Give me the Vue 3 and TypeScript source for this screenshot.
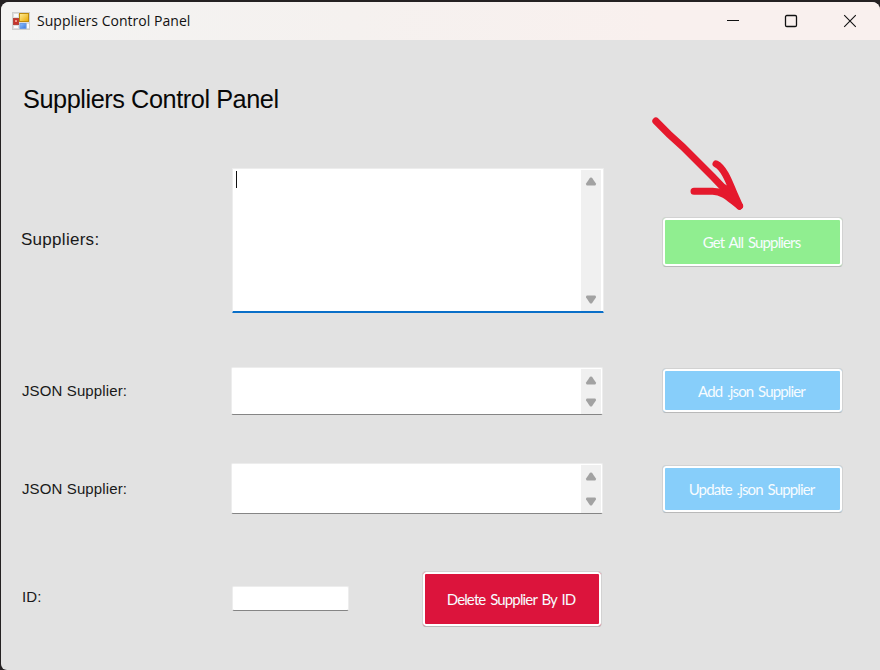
<script setup lang="ts">
import { ref } from 'vue'

interface Row {
  key: string
  label: string
  action: string
}

const rows: Row[] = [
  { key: 'all', label: 'Suppliers:', action: 'Get All Suppliers' },
  { key: 'add', label: 'JSON Supplier:', action: 'Add .json Supplier' },
  { key: 'update', label: 'JSON Supplier:', action: 'Update .json Supplier' },
]

const focused = ref('all')
</script>

<template>
  <div class="desktop">
    <main class="window">
      <header class="titlebar">
        <svg class="app-icon" width="18" height="18" viewBox="0 0 18 18">
          <defs>
            <linearGradient id="gold" x1="0" y1="0" x2="1" y2="1">
              <stop offset="0" stop-color="#ffee9a" />
              <stop offset="1" stop-color="#e9a800" />
            </linearGradient>
            <linearGradient id="blue" x1="0" y1="0" x2="1" y2="1">
              <stop offset="0" stop-color="#8fc0ff" />
              <stop offset="1" stop-color="#3a78dc" />
            </linearGradient>
          </defs>
          <rect x=".5" y=".5" width="17" height="17" fill="#dededc" stroke="#cfcfce" />
          <path d="M2 2h4v3H2zM2 14h4v2H2zM15 12h2v4h-2z" fill="#fbfbfb" />
          <rect x="1.5" y="6.5" width="5" height="6" fill="#c8342b" stroke="#b5443c" />
          <rect x="3" y="8" width="2" height="2" fill="#ee9a8c" />
          <rect x="7.5" y="1.5" width="9" height="8" fill="url(#gold)" stroke="#bd8a0c" />
          <rect x="8" y="11.5" width="6" height="5" fill="url(#blue)" stroke="#6d9de6" />
        </svg>
        <span class="caption">Suppliers Control Panel</span>
        <svg class="controls" width="132" height="14" viewBox="0 0 132 14" fill="none" stroke="#111" stroke-width="1.1">
          <path d="M1 6.5h12" />
          <rect x="59.5" y="1.5" width="11" height="11" rx="1.3" stroke-width="1.3" />
          <path d="M118.2 1.2l11.6 11.6M129.8 1.2l-11.6 11.6" />
        </svg>
      </header>

      <section class="form">
        <h1>Suppliers Control Panel</h1>

        <div v-for="row in rows" :key="row.key" class="row" :class="row.key">
          <label>{{ row.label }}</label>
          <div class="box" :class="{ focused: focused === row.key }">
            <i v-if="focused === row.key" class="caret"></i>
            <div class="scroll">
              <svg width="12" height="9" viewBox="0 0 12 9"><path d="M5 .8Q6 0 7 .8L10.9 6.5Q11.3 8.4 10 8.4H2Q.7 8.4 1.1 6.500Z" /></svg>
              <svg width="12" height="9" viewBox="0 0 12 9"><path d="M5 8.2Q6 9 7 8.2L10.9 2.5Q11.3 .6 10 .6H2Q.7 .6 1.1 2.500Z" /></svg>
            </div>
          </div>
          <button type="button"><span>{{ row.action }}</span></button>
        </div>

        <div class="row remove">
          <label>ID:</label>
          <div class="box id-box"></div>
          <button type="button"><span>Delete Supplier By ID</span></button>
        </div>
      </section>
    </main>

    <svg class="arrow" width="100" height="100" viewBox="650 113 100 100" fill="none" stroke="#e5192d" stroke-width="7" stroke-linecap="round" stroke-linejoin="round">
      <path d="M655.8 121Q669 135 683 147L713 177Q726 190 739.5 206" />
      <path d="M716 163.8C726 169 731 188 736 198L739.5 206" />
      <path d="M694 191.3H712C724 191 731 200 739.5 206" />
      <path d="M725 186L733 190L737 201L724 191Z" fill="#e5192d" stroke-width="3" />
    </svg>
  </div>
</template>

<style>
body {
  margin: 0;
  overflow: hidden;
}
</style>

<style scoped>
.desktop {
  position: relative;
  box-sizing: border-box;
  width: 880px;
  height: 670px;
  padding: 2px 0 0 1px;
  background: #242122;
  font-family: 'Liberation Sans', Arial, sans-serif;
  overflow: hidden;
}
.window {
  height: 668px;
  border-radius: 8px 8px 0 6px;
  background: #e2e2e2;
  overflow: hidden;
}
.titlebar {
  display: flex;
  align-items: center;
  box-sizing: border-box;
  height: 38px;
  padding: 0 22px 0 11px;
  background: linear-gradient(90deg, #f3f3f2 0%, #f5f1ef 40%, #f9f0ee 75%);
}
.caption {
  flex: 1;
  margin-left: 7px;
  font: 14px/20px 'Open Sans', 'Noto Sans', sans-serif;
  letter-spacing: 0.03px;
  color: #111;
  white-space: nowrap;
}
.form {
  padding: 43px 0 0 20px;
}
h1 {
  margin: 0 0 0 2px;
  height: 32px;
  font-size: 25.3px;
  line-height: 32px;
  font-weight: 400;
  letter-spacing: -0.44px;
  color: #080808;
  white-space: nowrap;
}
.row {
  display: grid;
  align-items: center;
}
.row > button {
  justify-self: end;
}
.all {
  grid-template-columns: 211px 372px 239px;
  margin-top: 53px;
  height: 145px;
}
.add {
  grid-template-columns: 210px 372px 240px;
  margin-top: 54px;
  height: 48px;
}
.update {
  grid-template-columns: 210px 372px 240px;
  margin-top: 48px;
  height: 51px;
}
.remove {
  grid-template-columns: 211px 118px 252px;
  margin-top: 57px;
  height: 56px;
}
label {
  font-size: 15px;
  line-height: 20px;
  letter-spacing: 0.12px;
  color: #191919;
  white-space: nowrap;
  padding-left: 1px;
}
.all label {
  font-size: 17px;
  letter-spacing: 0.28px;
  padding: 0 0 1px;
}
.remove label {
  padding-bottom: 4px;
}
.box {
  box-sizing: border-box;
  display: flex;
  justify-content: space-between;
  height: 100%;
  padding: 2px 2px 0 3px;
  background: #fff;
  border: 1px solid #ededed;
  border-bottom: 1px solid #858585;
  border-radius: 2px;
}
.box.focused {
  border-bottom: 2px solid #0a6fc8;
  border-radius: 1px;
}
.caret {
  width: 1px;
  height: 17px;
  background: #111;
}
.scroll {
  display: flex;
  flex-direction: column;
  align-items: center;
  justify-content: space-between;
  box-sizing: border-box;
  width: 20px;
  margin: -1px -1px 0 auto;
  padding: 7px 0;
  background: #f0f0f0;
}
.focused .scroll {
  margin-right: 0;
}
.scroll svg {
  fill: #a2a2a2;
}
.id-box {
  width: 117px;
  height: 25px;
  margin-bottom: 2px;
}
button {
  box-sizing: border-box;
  width: 181px;
  padding: 0 2px 0 0;
  border: 1px solid #d2d2d2;
  border-bottom-color: #b9b9b9;
  border-radius: 4px;
  background: #87cefa;
  box-shadow: inset 0 0 0 2px #fff;
  color: #f7fcff;
  font: 15px/20px Lato, 'Liberation Sans', sans-serif;
  letter-spacing: -0.86px;
  word-spacing: 1.8px;
  white-space: nowrap;
}
.all button {
  height: 50px;
  margin-top: 3px;
  background: #90ee90;
}
.add button {
  height: 45px;
  margin-bottom: 1px;
}
.update button {
  height: 48px;
}
.remove button {
  width: 180px;
  height: 56px;
  background: #dc143c;
}
.arrow {
  position: absolute;
  left: 650px;
  top: 113px;
}
</style>
